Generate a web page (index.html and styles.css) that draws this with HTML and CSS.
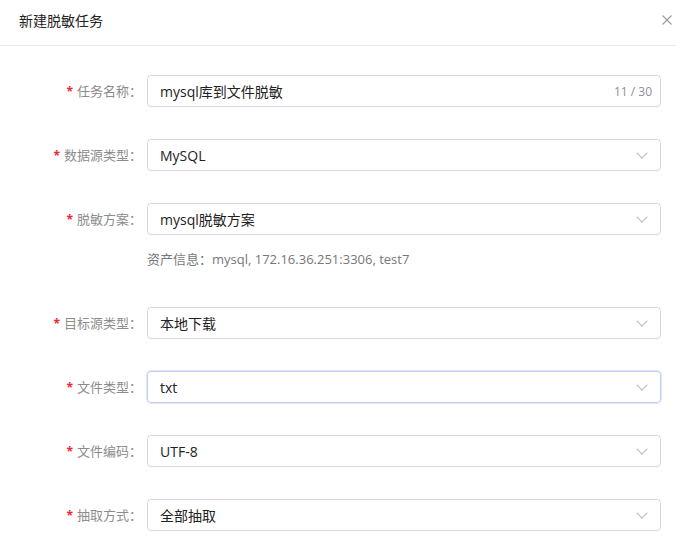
FILE: index.html
```html
<!DOCTYPE html>
<html lang="zh-CN">
<head>
    <meta charset="UTF-8">
    <title>新建脱敏任务</title>
    <link rel="stylesheet" href="styles.css">
</head>
<body>
    <div class="dialog">
        <div class="dialog-header">
            <span class="dialog-title">新建脱敏任务</span>
            <span class="close-button">
                <svg width="10" height="10" viewBox="0 0 10 10"><path d="M0.5 0.5L9.5 9.5M9.5 0.5L0.5 9.5" stroke="#9a9a9a" stroke-width="1.1" fill="none"/></svg>
            </span>
        </div>
        <form class="task-form">
            <div class="form-item">
                <label class="form-label"><i>*</i>任务名称：</label>
                <div class="form-control">
                    <div class="input">
                        <span class="input-value">mysql库到文件脱敏</span>
                        <span class="counter">11 / 30</span>
                    </div>
                </div>
            </div>
            <div class="form-item">
                <label class="form-label"><i>*</i>数据源类型：</label>
                <div class="form-control">
                    <div class="input select"><span class="input-value">MySQL</span><span class="arrow"></span></div>
                </div>
            </div>
            <div class="form-item with-hint">
                <label class="form-label"><i>*</i>脱敏方案：</label>
                <div class="form-control">
                    <div class="input select"><span class="input-value">mysql脱敏方案</span><span class="arrow"></span></div>
                    <div class="hint">资产信息：mysql, 172.16.36.251:3306, test7</div>
                </div>
            </div>
            <div class="form-item">
                <label class="form-label"><i>*</i>目标源类型：</label>
                <div class="form-control">
                    <div class="input select"><span class="input-value">本地下载</span><span class="arrow"></span></div>
                </div>
            </div>
            <div class="form-item">
                <label class="form-label"><i>*</i>文件类型：</label>
                <div class="form-control">
                    <div class="input select focused"><span class="input-value">txt</span><span class="arrow"></span></div>
                </div>
            </div>
            <div class="form-item">
                <label class="form-label"><i>*</i>文件编码：</label>
                <div class="form-control">
                    <div class="input select"><span class="input-value">UTF-8</span><span class="arrow"></span></div>
                </div>
            </div>
            <div class="form-item">
                <label class="form-label"><i>*</i>抽取方式：</label>
                <div class="form-control">
                    <div class="input select"><span class="input-value">全部抽取</span><span class="arrow"></span></div>
                </div>
            </div>
        </form>
    </div>
</body>
</html>
```

FILE: styles.css
```css
body {
    margin: 0;
    padding: 0;
    background: white;
    font-family: "Open Sans", "Noto Sans CJK SC", sans-serif;
    color: #333;
}
.dialog-header {
    display: flex;
    justify-content: space-between;
    align-items: center;
    height: 46px;
    padding: 0 4px 6px 19px;
    box-sizing: border-box;
    border-bottom: 1px solid #e8e8e8;
}
.dialog-title {
    font-size: 14px;
    color: #222;
}
.close-button {
    display: flex;
}
.task-form {
    padding: 29px 15px 0 0;
}
.form-item {
    display: flex;
    margin-bottom: 32px;
}
.form-item:last-child {
    margin-bottom: 0;
}
.form-label {
    width: 142px;
    flex-shrink: 0;
    padding-right: 5px;
    height: 32px;
    line-height: 32px;
    text-align: right;
    font-size: 13px;
    color: #8c8c8c;
}
.form-label i {
    font-style: normal;
    font-weight: bold;
    color: #f5222d;
    margin-right: 4px;
    font-size: 12px;
}
.form-control {
    flex: 1;
}
.input {
    display: flex;
    align-items: center;
    height: 32px;
    box-sizing: border-box;
    padding: 0 8px 0 12px;
    border: 1px solid #d4d7e2;
    border-radius: 4px;
    font-size: 14px;
    color: #222;
}
.input-value {
    flex: 1;
}
.counter {
    font-size: 12px;
    color: #8f8f99;
}
.select {
    padding-right: 14px;
}
.arrow {
    width: 7px;
    height: 7px;
    border-right: 1px solid #b8bbc4;
    border-bottom: 1px solid #b8bbc4;
    transform: rotate(45deg);
    margin-top: -5px;
}
.focused {
    border-color: #c7cdf3;
    box-shadow: 0 0 0 1px #dfe3fa;
}
.with-hint {
    margin-bottom: 38px;
}
.hint {
    margin-top: 14px;
    line-height: 20px;
    font-size: 13px;
    color: #777;
}
```
